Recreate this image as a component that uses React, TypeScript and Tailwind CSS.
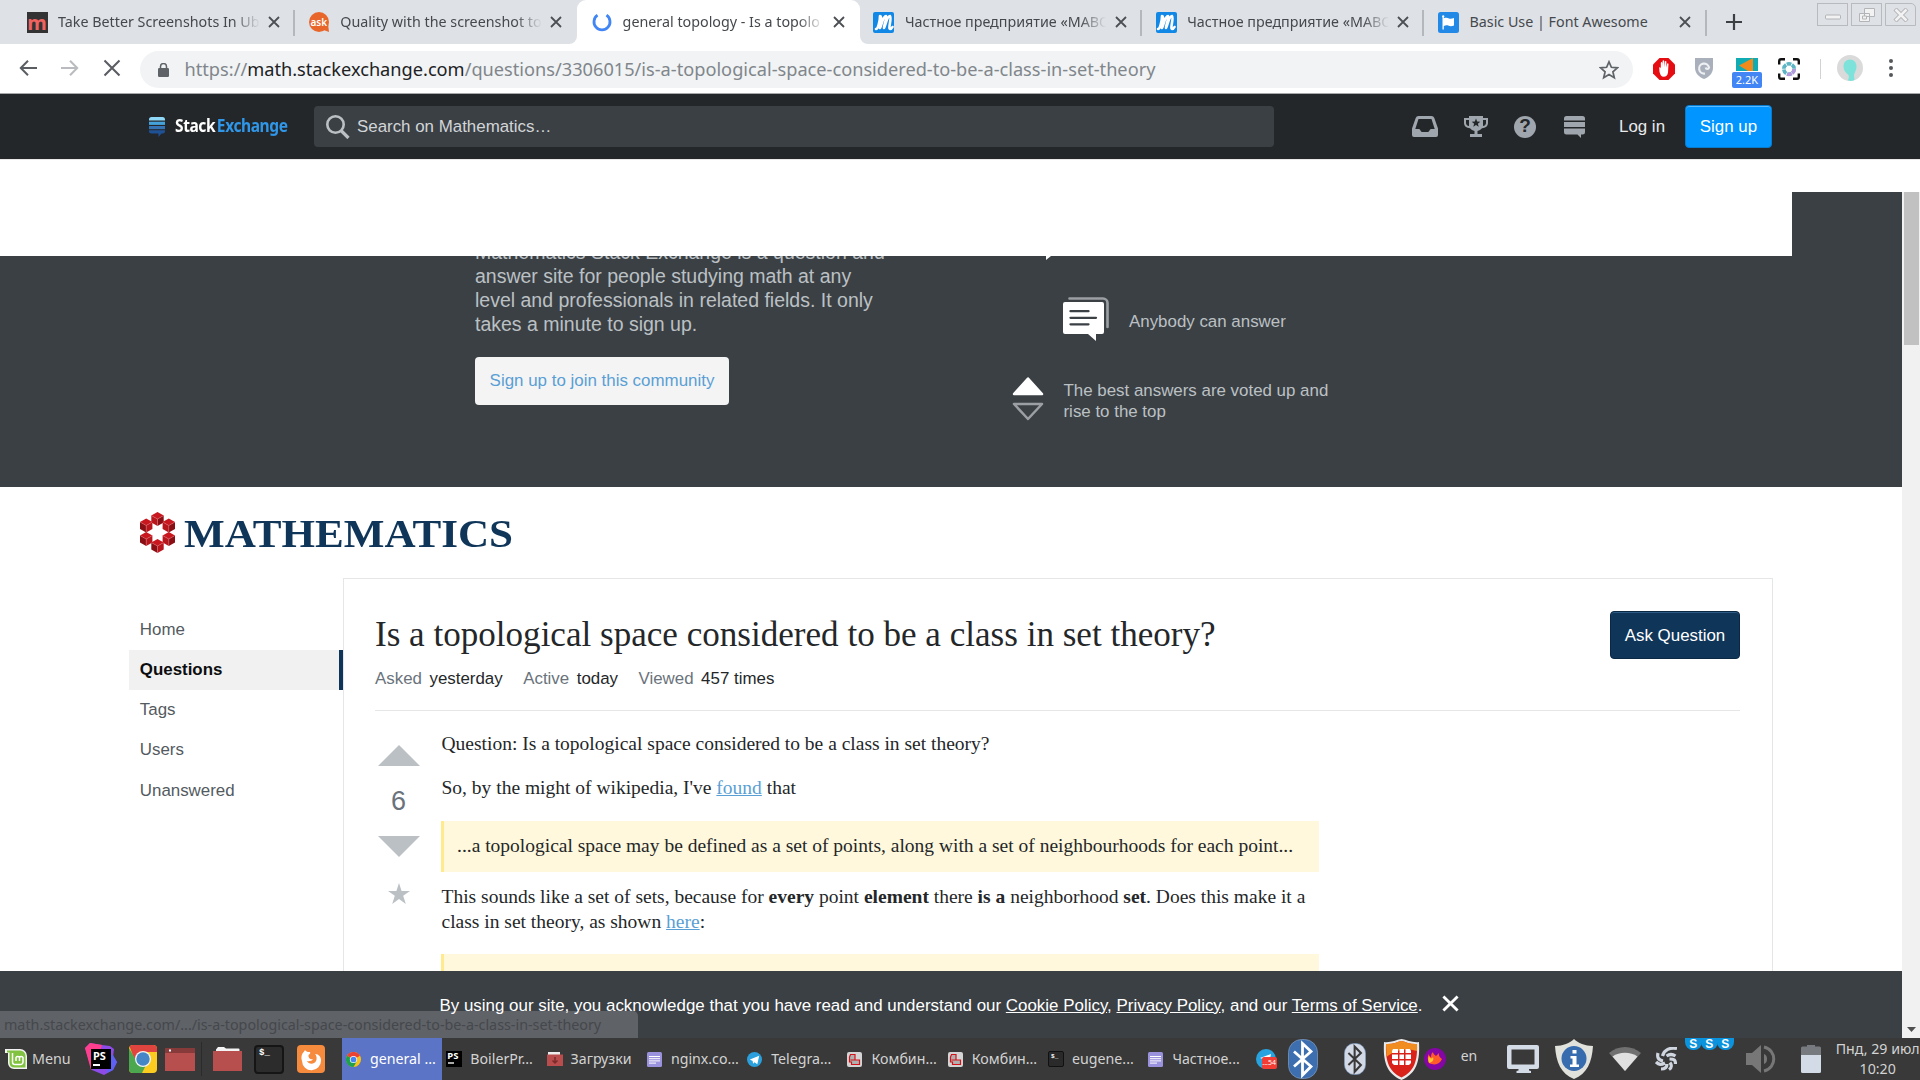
import type { ReactNode } from "react";

const SANS = "font-['Liberation_Sans',Arial,sans-serif]";
const SERIF = "font-['Liberation_Serif','Times_New_Roman',serif]";
const NOTO = "font-['Noto_Sans',sans-serif]";

/* ---------- Browser tabs ---------- */

function MavFavicon() {
  return (
    <div className="flex size-[21px] items-center justify-center rounded-[2px] bg-[#1188e6]">
      <svg viewBox="0 0 20 20" className="size-[20px]" fill="none" stroke="#fff" strokeWidth="2.600" strokeLinecap="round" strokeLinejoin="round">
        <path d="M2 17c2 0 4-8 4-13 2 0 1 8 0 12 2-4 3-12 6-12 1 3-2 8-2 12 2-4 3-12 6-12 2 1-2 13 0 13 1 0 2-1 2.500-2" />
      </svg>
    </div>
  );
}

const tabs: { title: string; active?: boolean; line?: boolean; icon: ReactNode }[] = [
  {
    title: "Take Better Screenshots In Ub",
    line: true,
    icon: <div className="flex size-[21px] items-end justify-center bg-[#333] text-[20px] leading-[20px] font-bold text-[#f0625f]">m</div>,
  },
  {
    title: "Quality with the screenshot to",
    icon: (
      <div className="relative flex size-[20px] items-center justify-center rounded-full bg-[#e8662a]">
        <svg className="absolute right-0 bottom-0 size-[8px]" viewBox="0 0 8 8"><path d="M0 5 7 0 8 8Z" fill="#e8662a" /></svg>
        <span className="relative text-[10px] leading-none font-semibold text-white">ask</span>
      </div>
    ),
  },
  {
    title: "general topology - Is a topolo",
    active: true,
    icon: (
      <svg viewBox="0 0 20 20" className="ml-px size-[20px]" fill="none" stroke="#4285f4" strokeWidth="2.800">
        <path d="M5.500 3.200A8 8 0 1 0 14.500 3.200" />
      </svg>
    ),
  },
  { title: "Частное предприятие «МАВС", line: true, icon: <MavFavicon /> },
  { title: "Частное предприятие «МАВС", line: true, icon: <MavFavicon /> },
  {
    title: "Basic Use | Font Awesome",
    line: true,
    icon: (
      <svg viewBox="0 0 21 21" className="size-[21px]">
        <rect width="21" height="21" rx="2.500" fill="#228ae6" />
        <path d="M4 4.500a1.200 1.200 0 1 1 1.800 1v.8c2-.8 3.500-.6 5.200.1 1.600.6 3 .2 5-.5v7.500c-2 .9-3.600 1-5.200.4-1.700-.6-3-.7-5 .2V17.500H4.500V5.500Z" fill="#fff" />
      </svg>
    ),
  },
];

function Cross({ className }: { className: string }) {
  return (
    <svg viewBox="0 0 12 12" className={className} fill="none" stroke="currentColor">
      <path d="M1 1 11 11M11 1 1 11" />
    </svg>
  );
}

function TabStrip() {
  return (
    <div className={`flex h-[44px] bg-[#dee1e6] pl-[13px] ${NOTO}`}>
      {tabs.map((t, i) => (
        <div key={i} className={`relative flex w-[282.300px] shrink-0 items-center pl-[13.500px] ${t.active ? "-ml-px w-[283.300px] rounded-t-[9px] bg-white pl-[14.500px]" : ""}`}>
          {t.active && (
            <>
              <span className="absolute bottom-0 -left-[8px] size-[8px] bg-white"><span className="block size-full rounded-br-[8px] bg-[#dee1e6]" /></span>
              <span className="absolute -right-[8px] bottom-0 size-[8px] bg-white"><span className="block size-full rounded-bl-[8px] bg-[#dee1e6]" /></span>
            </>
          )}
          <div className="w-[21px]">{t.icon}</div>
          <div className={`ml-[10.500px] w-[203.500px] pb-[1px] text-[14.300px] whitespace-nowrap text-[#45494d] ${i < 5 ? "[mask-image:linear-gradient(to_right,black_86%,transparent_99%)]" : ""}`}>
            {t.title}
          </div>
          <Cross className="ml-[6.500px] size-[12px] stroke-[1.800] text-[#4c5054]" />
          {t.line && <span className="absolute top-[10px] right-0 h-[26px] w-[2px] bg-[#b4b7bb]" />}
        </div>
      ))}
      <svg viewBox="0 0 16 16" className="mt-[14px] ml-[19px] size-[16px]" stroke="#3c4043" strokeWidth="2.200"><path d="M8 0v16M0 8h16" /></svg>
      <div className="mt-[3px] ml-[75.500px] flex gap-[3px] text-[#b3b4b7]">
        <div className="flex h-[23px] w-[31px] items-center justify-center border border-[#b9babd]">
          <svg viewBox="0 0 16 6" className="mt-[5px] w-[16px]" fill="#f2f2f2" stroke="currentColor"><rect x=".5" y="1" width="15" height="4" rx="1" /></svg>
        </div>
        <div className="flex h-[23px] w-[31px] items-center justify-center border border-[#b9babd]">
          <svg viewBox="0 0 16 14" className="w-[16px]" fill="#f2f2f2" stroke="currentColor"><path d="M5.500.5h10v8h-10zM.5 5.500h10v8H.5z" /><path d="M3.500 8h4v3h-4z" /></svg>
        </div>
        <div className="flex h-[23px] w-[31px] items-center justify-center rounded-tr-[5px] border border-[#b9babd]">
          <svg viewBox="0 0 16 14" className="w-[16px]"><path d="M2 1 14 13M14 1 2 13" stroke="#b3b4b7" strokeWidth="4.500" /><path d="M2.500 1.500 13.500 12.500M13.500 1.500 2.500 12.500" stroke="#f2f2f2" strokeWidth="2.500" /></svg>
        </div>
      </div>
    </div>
  );
}

/* ---------- Address bar ---------- */

function AddressBar() {
  return (
    <div className={`flex h-[50px] items-start border-b border-[#a6a8aa] bg-white ${NOTO}`}>
      <div className="mt-[15px] ml-[19px] flex w-[121px] items-center text-[#5a5d62]">
        <svg viewBox="0 0 18 16" className="w-[18px]" fill="none" stroke="currentColor" strokeWidth="2"><path d="M18 8H2M9 .8 1.800 8 9 15.200" /></svg>
        <svg viewBox="0 0 18 16" className="ml-[24px] w-[18px]" fill="none" stroke="#b9bbbe" strokeWidth="2"><path d="M0 8H16M9 .8 16.200 8 9 15.200" /></svg>
        <Cross className="ml-[24px] size-[18px] stroke-[1.400]" />
      </div>
      <div className="mt-[7px] flex h-[37px] w-[1493px] items-center rounded-full bg-[#f1f3f4] pl-[18px]">
        <svg viewBox="0 0 11 14" className="w-[11px]"><rect y="5" width="11" height="9" rx="1.200" fill="#5f6368" /><path d="M2.500 6V3.500a3 3 0 0 1 6 0V6" fill="none" stroke="#5f6368" strokeWidth="1.500" /></svg>
        <div className="ml-[15.500px] w-[1400.500px] text-[18.200px] leading-none whitespace-nowrap text-[#80868b]">
          https://<span className="text-[#202124]">math.stackexchange.com</span>/questions/3306015/is-a-topological-space-considered-to-be-a-class-in-set-theory
        </div>
        <svg viewBox="0 0 20 20" className="ml-[14px] size-[20px] shrink-0" fill="none" stroke="#5f6368" strokeWidth="1.700"><path d="m10 1.800 2.400 5.500 6 .5-4.500 4 1.400 5.900L10 14.500l-5.300 3.200 1.400-5.900-4.500-4 6-.5Z" /></svg>
      </div>
      <svg viewBox="0 0 22 22" className="mt-[14px] ml-[20px] size-[22px]">
        <path d="M6.500 0h9L22 6.500v9L15.500 22h-9L0 15.500v-9Z" fill="#e60d12" />
        <path d="M6.200 9.500c.9-.6 1.400.2 1.600 1V5c.2-1.200 1.300-1.200 1.500 0v4l.3-6c.2-1.100 1.400-1.100 1.600 0l.2 6 .5-5.400c.2-1 1.400-.9 1.500 0L13.300 9.500l.8-3.700c.3-1 1.400-.7 1.400.3l-.5 8.500c-.4 3-2 4.200-4.200 4.200-2.600 0-3.600-2-4.300-5Z" fill="#fff" />
      </svg>
      <svg viewBox="0 0 18 21" className="mt-[14px] ml-[20px] w-[18px]"><path d="M0 0h18v10c0 5-4 9-9 11-5-2-9-6-9-11Z" fill="#a9b0bb" /><path d="M10 15.500A5 5 0 1 1 14 9.500c-.5 2-3 2-3.300 0" fill="none" stroke="#eef0f3" strokeWidth="2.200" /></svg>
      <div className="mt-[14px] ml-[19px] flex w-[30px] flex-col items-center">
        <svg viewBox="0 0 22 13" className="w-[22px]"><path fill="#0fadb3" d="M0 0h22v13H0z" /><path fill="#f08a1d" d="M3 7.500 17 0v13H12Z" /></svg>
        <div className="mt-px h-[16px] w-[30px] rounded-[2px] bg-[#4285f4] text-center text-[11px] leading-[16px] text-white">2.2K</div>
      </div>
      <svg viewBox="0 0 22 22" className="mt-[14px] ml-[16px] size-[22px]" fill="none">
        <path d="M1.200 6.500V3a1.800 1.800 0 0 1 1.800-1.800h4M15 1.200h4A1.800 1.800 0 0 1 20.800 3v3.500M20.800 15.500V19a1.800 1.800 0 0 1-1.800 1.800h-4M7 20.800H3A1.800 1.800 0 0 1 1.200 19v-3.500" stroke="#111" strokeWidth="2.400" />
        <circle cx="11" cy="11" r="5.200" stroke="#5cb4c4" strokeWidth="3.600" strokeDasharray="4.600 .8" />
        <path d="M16.200 11a5.200 5.200 0 0 1-7 5" stroke="#b597dc" strokeWidth="3.600" strokeDasharray="4.600 .8" />
      </svg>
      <span className="mt-[15px] ml-[20px] h-[20px] w-px bg-[#d0d2d4]" />
      <svg viewBox="0 0 26 26" className="mt-[11px] ml-[16px] size-[26px]"><circle cx="13" cy="13" r="13" fill="#dadada" /><path d="M13 4.500c4 0 6.500 3 6.500 7 0 4-2 5.500-2.500 9l.5 4.500c-3 1.500-6 1-6.500 0 1-2 1-3.500.5-5C8.500 18 6.500 15 6.500 11.500c0-4 2.500-7 6.500-7Z" fill="#7de3da" /></svg>
      <svg viewBox="0 0 4 18" className="mt-[15px] ml-[26px] w-[4px]" fill="#54585d"><circle cx="2" cy="2" r="2" /><circle cx="2" cy="9" r="2" /><circle cx="2" cy="16" r="2" /></svg>
    </div>
  );
}

/* ---------- Site header ---------- */

function SiteHeader() {
  return (
    <div className={`flex h-[65px] items-center bg-[#242729] pl-[149px] text-[16.900px] ${SANS}`}>
      <svg viewBox="0 0 16 20" className="w-[16px]">
        <path d="M0 3.500V2.500A2.500 2.500 0 0 1 2.500 0h11A2.500 2.500 0 0 1 16 2.500v1Z" fill="#8fd8f7" />
        <path d="M0 4.700h16v3.200H0z" fill="#46a2da" />
        <path d="M0 9h16v3.200H0z" fill="#3673b5" />
        <path d="M0 13.300h16V14a2.500 2.500 0 0 1-2.500 2.500H12.500L9.500 20v-3.500h-7A2.500 2.500 0 0 1 0 14Z" fill="#1f5196" />
      </svg>
      <div className="ml-[9.500px] w-[139.500px]">
        <span className={`inline-block origin-left scale-x-[0.840] text-[18.500px] leading-none font-bold tracking-[-0.500px] whitespace-nowrap text-white ${NOTO}`}>
          Stack<span className="ml-[2px] text-[#2f96e8]">Exchange</span>
        </span>
      </div>
      <div className="flex h-[41px] w-[960px] items-center rounded-[4px] bg-[#3b4045] pl-[12px] text-[#d2d5d8]">
        <svg viewBox="0 0 24 24" className="mt-px size-[24px]" fill="none" stroke="#bbc0c4"><circle cx="9.500" cy="9.500" r="8.200" strokeWidth="2.600" /><path d="m15 15.500 7.500 7.500" strokeWidth="3.200" /></svg>
        <span className="ml-[7px]">Search on Mathematics…</span>
      </div>
      <div className="ml-[138px] flex items-center">
        <svg viewBox="0 0 26 21" className="w-[26px]" fill="#9fa6ad"><path fillRule="evenodd" d="M6.500 0h13a3 3 0 0 1 2.800 2L26 12.500V19a2 2 0 0 1-2 2H2a2 2 0 0 1-2-2v-6.500L3.700 2a3 3 0 0 1 2.800-2Zm0 3L3.300 13H7c1.500 0 1.500 3 3 3h6c1.500 0 1.500-3 3-3h3.700L19.500 3Z" /></svg>
        <svg viewBox="0 0 24 21" className="ml-[25.500px] w-[24px]" fill="#9fa6ad">
          <path fillRule="evenodd" d="M5 0h14v2h5v5c0 3-2.500 5-6 5.300A7 7 0 0 1 13.500 15v3H18v3H6v-3h4.500v-3A7 7 0 0 1 6 12.300C2.500 12 0 10 0 7V2h5Zm0 4H2v3c0 1.600 1.200 2.700 3 3Zm14 6c1.800-.3 3-1.400 3-3V4h-3Z" />
          <path d="m12 2.500 1.200 3 3.100.2-2.400 2 .8 3.100L12 9.100l-2.700 1.700.8-3.100-2.400-2 3.100-.2Z" fill="#242729" />
        </svg>
        <div className="ml-[26.500px] flex size-[22px] items-center justify-center rounded-full bg-[#9fa6ad] text-[19px] font-bold text-[#242729]">?</div>
        <svg viewBox="0 0 21 22" className="mt-px ml-[28px] w-[21px]" fill="#9fa6ad"><path d="M0 4.600V2.500A2.500 2.500 0 0 1 2.500 0h16A2.500 2.500 0 0 1 21 2.500V4.600ZM0 5.900h21v5H0zM0 12.400h21V16a2.500 2.500 0 0 1-2.500 2.500H17V22l-3.500-3.500h-11A2.500 2.500 0 0 1 0 16Z" /></svg>
        <span className="ml-[34px] w-[66px] whitespace-nowrap text-[#e8eaec]">Log in</span>
        <div className="flex h-[43px] w-[87px] items-center justify-center rounded-[4px] border border-[#077ccf] bg-[#0095ff] whitespace-nowrap text-white shadow-[inset_0_1px_0_#5cbaff]">Sign up</div>
      </div>
    </div>
  );
}

/* ---------- Hero ---------- */

function Hero() {
  return (
    <div className={`relative flex h-[231px] bg-[#3b4045] pl-[475px] text-[#bbc0c4] ${SANS}`}>
      <div className="w-[536px] shrink-0 overflow-hidden">
        <p className="-mt-[16px] text-[19.500px] leading-[24px] whitespace-nowrap">
          Mathematics Stack Exchange is a question and<br />answer site for people studying math at any<br />level and professionals in related fields. It only<br />takes a minute to sign up.
        </p>
        <div className="mt-[21px] flex h-[48px] w-[254px] items-center justify-center rounded-[4px] bg-[#f4f4f4] text-[16.930px] text-[#5a9fd4]">Sign up to join this community</div>
      </div>
      <div className="w-[330px]">
        <svg viewBox="0 0 5 4" className="ml-[35px] h-[4px] w-[5px]"><path d="M0 0h5L0 4Z" fill="#fff" /></svg>
        <div className="mt-[37px] ml-[52px] flex">
          <svg viewBox="0 0 46 44" className="h-[44px] w-[46px]" fill="none">
            <path d="M6.500 1.500H40a4.500 4.500 0 0 1 4.500 4.500v24" stroke="#9c9fa3" strokeWidth="2.600" strokeLinecap="round" />
            <path d="M2 5h37a2 2 0 0 1 2 2v28a2 2 0 0 1-2 2h-6v7l-8-7H2a2 2 0 0 1-2-2V7a2 2 0 0 1 2-2Z" fill="#fff" />
            <path d="M7.500 14.200H25.500M7.500 20.800H33M7.500 27.300H25.500" stroke="#3b4045" strokeWidth="2.300" strokeLinecap="round" />
          </svg>
          <span className="mt-[14px] ml-[20px] text-[16.900px] leading-[21px] whitespace-nowrap">Anybody can answer</span>
        </div>
        <div className="mt-[36px] ml-[0.500px] flex">
          <svg viewBox="0 0 32 44" className="h-[44px] w-[32px]" strokeLinejoin="round">
            <path d="M16 1.500 30 17H2Z" fill="#fff" stroke="#fff" strokeWidth="2.500" />
            <path d="M2 27h28L16 42Z" fill="none" stroke="#9c9fa3" strokeWidth="2.500" />
          </svg>
          <span className="mt-[3px] ml-[20px] text-[16.900px] leading-[21px] whitespace-nowrap">The best answers are voted up and<br />rise to the top</span>
        </div>
      </div>
      <span className="absolute right-0 bottom-full h-[64px] w-[110px] bg-[#3b4045]" />
    </div>
  );
}

/* ---------- Page content ---------- */

const cubes = [[17.500, 7], [6.200, 13.500], [28.800, 13.500], [6.200, 27], [28.800, 27], [17.500, 34]];

function MathLogo() {
  return (
    <div className="flex h-[91px] items-start pt-[25px] pl-[140px]">
      <svg viewBox="0 0 35 41" className="w-[35px]">
        {cubes.map(([x, y], i) => (
          <g key={i}>
            <path d={`M${x} ${y - 7}l6.200 3.500-6.200 3.500-6.200-3.500Z`} fill="#c8171e" />
            <path d={`M${x - 6.2} ${y - 3.5}l6.200 3.500v7l-6.200-3.500Z`} fill={i % 2 ? "#8a0f14" : "#b8161d"} />
            <path d={`M${x + 6.2} ${y - 3.5}l-6.200 3.500v7l6.200-3.500Z`} fill={i % 2 ? "#b8161d" : "#8a0f14"} />
            <path d={`M${x - 6.2} ${y - 3.5}l6.200 3.500 6.200-3.500M${x} ${y}v7`} fill="none" stroke="#e26a6e" strokeWidth=".5" />
          </g>
        ))}
      </svg>
      <span className={`ml-[9px] origin-left scale-x-[1.052] text-[41px] leading-[43px] font-bold text-[#0f3559] ${SERIF}`}>MATHEMATICS</span>
    </div>
  );
}

const nav = ["Home", "Questions", "Tags", "Users", "Unanswered"];

function SideNav() {
  return (
    <nav className={`mt-[31.500px] w-[214px] text-[16.900px] text-[#535a60] ${SANS}`}>
      {nav.map((n) => (
        <div key={n} className={`flex h-[40.200px] items-center pl-[10.800px] ${n === "Questions" ? "border-r-4 border-[#0f3559] bg-[#f1f1f1] font-bold text-[#0c0d0e]" : ""}`}>{n}</div>
      ))}
    </nav>
  );
}

function Stat({ label, value }: { label: string; value: string }) {
  return (
    <span className="mr-[20.500px] whitespace-nowrap text-[#242729]"><span className="mr-[7.500px] text-[#6a737c]">{label}</span>{value}</span>
  );
}

function Question() {
  return (
    <div className="h-[393px] w-[1430px] overflow-hidden border border-b-0 border-[#e4e6e8] pt-[32px] pr-[32px] pl-[31px]">
      <div className="flex justify-between">
        <h1 className={`text-[35.100px] leading-[48px] whitespace-nowrap text-[#242729] ${SERIF}`}>Is a topological space considered to be a class in set theory?</h1>
        <div className={`flex h-[48px] w-[130px] items-center justify-center rounded-[4px] border border-[#0a2744] bg-[#0f3559] pt-px text-[16.900px] text-white shadow-[inset_0_1px_0_#2e5a86] ${SANS}`}>Ask Question</div>
      </div>
      <div className={`mt-[8px] flex h-[44px] items-start border-b border-[#e4e6e8] text-[16.900px] leading-[24px] ${SANS}`}>
        <Stat label="Asked" value="yesterday" />
        <Stat label="Active" value="today" />
        <Stat label="Viewed" value="457 times" />
      </div>
      <div className="flex">
        <div className={`flex w-[47px] flex-col items-center pt-[34px] text-[#bbc0c4] ${SANS}`}>
          <svg viewBox="0 0 42 21" className="w-[42px]" fill="currentColor"><path d="M21 0 42 21H0Z" /></svg>
          <span className="mt-[18px] text-[27px] leading-[34px] text-[#6a737c]">6</span>
          <svg viewBox="0 0 42 21" className="mt-[18px] w-[42px]" fill="currentColor"><path d="M0 0h42L21 21Z" /></svg>
          <svg viewBox="0 0 22 21" className="mt-[26px] w-[22px]" fill="currentColor"><path d="m11 0 2.600 7.900H22l-6.800 4.900L17.800 21 11 16 4.200 21l2.600-8.200L0 7.900h8.400Z" /></svg>
        </div>
        <div className={`ml-[19px] w-[878px] text-[19.500px] leading-[25px] whitespace-nowrap text-[#242729] ${SERIF}`}>
          <p className="mt-[20px] pl-[0.500px]">Question: Is a topological space considered to be a class in set theory?</p>
          <p className="mt-[19px] pl-[0.500px]">So, by the might of wikipedia, I've <a className="text-[#5a9fd4] underline">found</a> that</p>
          <div className="mt-[21px] h-[51px] border-l-[3px] border-[#ffeb8e] bg-[#fff8dc] pt-[12px] pl-[13px]">...a topological space may be defined as a set of points, along with a set of neighbourhoods for each point...</div>
          <p className="mt-[12px] pl-[0.500px]">This sounds like a set of sets, because for <b>every</b> point <b>element</b> there <b>is a</b> neighborhood <b>set</b>. Does this make it a<br />class in set theory, as shown <a className="text-[#5a9fd4] underline">here</a>:</p>
          <div className="mt-[20px] h-[51px] border-l-[3px] border-[#ffeb8e] bg-[#fff8dc]" />
        </div>
      </div>
    </div>
  );
}

function CookieBar() {
  return (
    <div className={`relative flex h-[67px] items-center bg-[#3b4045] pl-[439.500px] text-[16.930px] whitespace-nowrap text-white ${SANS}`}>
      <div className={`absolute bottom-0 left-0 h-[27px] w-[638px] rounded-tr-[5px] bg-[#5f6267] pl-[4px] text-[14.300px] leading-[27px] text-[#45484c] ${NOTO}`}>
        math.stackexchange.com/.../is-a-topological-space-considered-to-be-a-class-in-set-theory
      </div>
      <span className="relative mt-[2px]">
        By using our site, you acknowledge that you have read and understand our <u>Cookie Policy</u>, <u>Privacy Policy</u>, and our <u>Terms of Service</u>.
      </span>
      <Cross className="mb-[2px] ml-[19.500px] size-[17px] stroke-[2]" />
    </div>
  );
}

function Scrollbar() {
  return (
    <div className="flex w-[18px] flex-col items-center justify-between bg-[#f1f1f1]">
      <span className="h-[153px] w-[15px] bg-[#c1c1c1]" />
      <svg viewBox="0 0 9 5" className="mb-[6px] w-[9px]"><path d="M0 0h9L4.500 5Z" fill="#505050" /></svg>
    </div>
  );
}

/* ---------- Taskbar ---------- */

function ChromeIcon({ className }: { className: string }) {
  return (
    <svg viewBox="0 0 20 20" className={className}>
      <circle cx="10" cy="10" r="10" fill="#fbc116" />
      <path d="M10 10 1.300 5A10 10 0 0 1 18.700 5Z" fill="#ea4335" />
      <path d="M1.300 5A10 10 0 0 0 10 20l4.300-7.500L10 10Z" fill="#1ea050" />
      <circle cx="10" cy="10" r="4.800" fill="#fff" /><circle cx="10" cy="10" r="3.800" fill="#4285f4" />
    </svg>
  );
}

function PsIcon() {
  return (
    <div className="flex size-[16px] flex-col bg-black pl-[1px] text-[9.500px] leading-[10px] font-bold text-white">PS<span className="mt-[1px] ml-[1px] h-[2px] w-[6px] bg-[#aaa]" /></div>
  );
}
function DocIcon() {
  return (
    <svg viewBox="0 0 15 15" className="size-[15px]"><rect width="15" height="15" rx="1.500" fill="#9a92dc" /><path d="M2 4.500h11M2 6.700h11M2 8.900h11M2 11.100h7" stroke="#fff" /></svg>
  );
}
function CombineIcon() {
  return (
    <svg viewBox="0 0 15 15" className="size-[15px]"><rect width="15" height="15" rx="2" fill="#d4d4d4" /><path d="M3.500 2.500h4.500V8h4.500v4.500h-8V10H2.500V5Zm0 5.500H8" fill="#b0b0b0" stroke="#d3131b" strokeWidth="1.200" /></svg>
  );
}

const tasks: { label: string; icon: ReactNode; active?: boolean }[] = [
  { label: "general ...", active: true, icon: <ChromeIcon className="size-[15px]" /> },
  { label: "BoilerPr...", icon: <PsIcon /> },
  { label: "Загрузки", icon: <svg viewBox="0 0 16 14" className="w-[16px]"><path d="M1 0h12v3H1z" fill="#eee" /><path d="M0 2.500h16V14H0z" fill="#b94c4c" /><path d="M8 5v6M5.500 8.500 8 11l2.500-2.500" fill="none" stroke="#7b2b2b" strokeWidth="1.500" /></svg> },
  { label: "nginx.co...", icon: <DocIcon /> },
  { label: "Telegra...", icon: <svg viewBox="0 0 16 16" className="size-[15px]"><circle cx="8" cy="8" r="8" fill="#2ba0dc" /><path d="m3 8 10-4-2 9-3-2-1.500 1.500L6 9.500Z" fill="#fff" /></svg> },
  { label: "Комбин...", icon: <CombineIcon /> },
  { label: "Комбин...", icon: <CombineIcon /> },
  { label: "eugene...", icon: <div className="size-[16px] rounded-[2px] border border-[#111] bg-[#2a2a2a] pl-[2px] font-mono text-[6px] leading-[9px] font-bold text-white">$_</div> },
  { label: "Частное...", icon: <DocIcon /> },
];

function Bluetooth({ className, bg, fg }: { className: string; bg: string; fg: string }) {
  return (
    <svg viewBox="0 0 30 40" className={className} preserveAspectRatio="none">
      <rect x=".5" y=".5" width="29" height="39" rx="13" fill={bg} stroke="#7895bd" strokeWidth=".8" />
      <path d="m6 12.500 17 15-8.500 8.500V4.500L23 12.500 6 27.500" fill="none" stroke={fg} strokeWidth="2.800" />
    </svg>
  );
}

function Skype() {
  return (
    <div className="-mr-[1px] flex h-[12px] w-[17px] items-end justify-center rounded-b-[8px] bg-[#0c93dd] text-[12px] leading-[12px] font-bold text-white">S</div>
  );
}

function Taskbar() {
  return (
    <div className={`flex h-[42px] items-center overflow-hidden bg-[#393939] text-[#d3d3d3] ${NOTO}`}>
      <svg viewBox="0 0 22 20" className="ml-[5px] w-[22px]">
        <path d="M0 0h15a7 7 0 0 1 7 7v13H9a6 6 0 0 1-6-6V4H0Z" fill="#f3f3f3" />
        <path d="M2 1.500h13A5.500 5.500 0 0 1 20.500 7v11.500H9.500A5 5 0 0 1 4.500 14V3.500H2Z" fill="#81c341" />
        <path d="M7.500 4V13a2.500 2.500 0 0 0 2.500 2.500h5.500A2.500 2.500 0 0 0 18 13V8.500a2 2 0 0 0-3.500 0V12 8.500a2 2 0 0 0-3.500 0V12" fill="none" stroke="#fff" strokeWidth="1.500" />
      </svg>
      <span className="ml-[5px] w-[48px] text-[14.300px]">Menu</span>
      <div className="relative ml-[5px] size-[32px]">
        <svg viewBox="0 0 32 32" className="absolute size-[32px]"><path d="M0 5 5 0l12 2 8 1 4 3-1 8 4 5-4 8-9 5-12-5Z" fill="#8d4be8" /><path d="M0 5 5 0l12 2-5 17-6 8Z" fill="#ff3f8e" /><path d="M24 12h4l4 7-4 8-6 3Z" fill="#5d62f5" /></svg>
        <div className="absolute top-[6px] left-[6px] h-[20px] w-[20px] bg-black pl-[2px] text-[11px] leading-[13px] font-bold text-white">PS<span className="mt-[2px] block h-[1.500px] w-[7px] bg-white" /></div>
      </div>
      <svg viewBox="0 0 28 28" className="ml-[12px] size-[28px]">
        <defs><clipPath id="sq"><rect width="28" height="28" rx="4" /></clipPath></defs>
        <g clipPath="url(#sq)"><path fill="#fccb1f" d="M0 0h28v28H0z" /><path d="M0 0h28v7H14L6 16Z" fill="#e0443e" /><path d="M0 3 8 17l9 3-4 8H0Z" fill="#4ba84f" /></g>
        <circle cx="14" cy="14" r="8" fill="#f4f4f4" /><circle cx="14" cy="14" r="6.700" fill="#4586c6" />
      </svg>
      <svg viewBox="0 0 30 23" className="ml-[8px] w-[30px]"><path fill="#b84f4f" d="M0 0h30v23H0z" /><path fill="#873a3a" d="M0 0h30v5H0z" /><path d="M4 1.500h2v2H4z" fill="#fff" /></svg>
      <span className="ml-[6px] h-[34px] w-px bg-[#2b2b2b]" />
      <svg viewBox="0 0 29 24" className="ml-[11px] w-[29px]"><path d="M3 2.500 5 0h6l2 1.500h12.500a1 1 0 0 1 1 1V6H3Z" fill="#f4f4f4" /><path fill="#b84f4f" d="M0 4h29v20H0z" /></svg>
      <div className="ml-[12px] h-[29px] w-[30px] rounded-[4px] border-2 border-[#151515] bg-[#2c2c2c] pl-[3px] font-mono text-[9px] leading-[12px] font-bold text-white">$_</div>
      <svg viewBox="0 0 28 28" className="ml-[13px] size-[28px]"><rect width="28" height="28" rx="4" fill="#f68a3d" /><path d="M5 9.500C6 7 7.500 6.500 8 5c1 1.500 2.500 2 4 2 2 0 1.500 2-.5 3-.5 3 2 5 4.500 4-1 3-6 2-6 2 1 3 7 4 9 0 1.500-3 0-6-1-7 4 0 6 3 6 6.500A9.500 9.500 0 0 1 5 16c-1-3-.5-5 0-6.500Z" fill="#fff" /></svg>
      <div className="ml-[17px] flex">
        {tasks.map((t, i) => (
          <div key={i} className={`flex h-[42px] w-[100.300px] items-center pl-[4px] ${t.active ? "bg-[#5b74c5] text-white" : ""}`}>
            <div className="w-[16px]">{t.icon}</div>
            <span className="ml-[8px] text-[14.200px] whitespace-nowrap">{t.label}</span>
          </div>
        ))}
      </div>
      <div className="ml-[11px] flex h-[42px] shrink-0 items-center">
        <div className="relative size-[20px] rounded-full bg-[#29a3df]">
          <svg viewBox="0 0 20 20" className="absolute size-[20px]"><path d="m4 9 11-4-1 5H7Z" fill="#fff" /></svg>
          <span className="absolute -right-px bottom-0 h-[12px] w-[15px] rounded-[2px] bg-[#f23c34] text-center text-[7px] leading-[12px] text-white">...54</span>
        </div>
        <Bluetooth className="ml-[12px] h-[40px] w-[30px]" bg="#3c6eb0" fg="#fff" />
        <Bluetooth className="ml-[26px] h-[32px] w-[22px]" bg="#d3dae6" fg="#393939" />
        <svg viewBox="0 0 37 41" className="ml-[17px] h-[41px] w-[37px]">
          <path d="M1 3C7 4 13 1 18.500 0 24 1 30 4 36 3c1 19-2 31-17.500 38C3 34 0 22 1 3Z" fill="#e9eaec" />
          <path d="M3 5c6 .6 11-2 15.500-3C23 3 28 5.600 34 5c.6 17-2.500 27-15.500 33.500C5.500 32 2.400 22 3 5Z" fill="#d8221a" />
          <path d="M3 5c6 .6 11-2 15.500-3C23 3 28 5.600 34 5v7c-8-3-22-2-30.500 6Z" fill="#f18d20" />
          <g fill="#fff"><path d="M10 10h5v4H9v-2ZM16.500 10h4.500v4h-4.500zM22.500 10H27l1 2v2h-5.500zM9 15.500h6v4.500H9zM16.500 15.500H21V20h-4.500zM22.500 15.500H28V20h-5.500zM9 21.500h6V26h-4l-2-2ZM16.500 21.500H21V26h-4.500zM22.500 21.500H28V24l-2 2h-3.500z" /></g>
        </svg>
        <svg viewBox="0 0 22 22" className="ml-[4px] size-[22px]"><circle cx="11" cy="11" r="11" fill="#8406a4" /><path d="M5 15C3 10 4 7 5 6c0 2 1 3 2 3 0-3 1-4 2-5 0 2 2 3 3 4l3-3c-.5 2 0 4 3 6-2 5-7 7-13 4Z" fill="#ff5a2c" /><path d="M5 15c-1-3-1-5 0-7 1 3 3 3 4 1 1 3 0 5-4 6Z" fill="#ffc52e" /></svg>
        <span className="mb-[7px] ml-[15px] w-[31px] text-[14px]">en</span>
        <svg viewBox="0 0 32 28" className="ml-[15px] w-[32px]" fill="#d3dbe6"><path fillRule="evenodd" d="M2 0h28a2 2 0 0 1 2 2v20a2 2 0 0 1-2 2h-8v1.500l2 .5v2H9.500v-2l2-.5V24H2a2 2 0 0 1-2-2V2a2 2 0 0 1 2-2Zm2.500 4.500v15h23v-15Z" /></svg>
        <svg viewBox="0 0 38 40" className="ml-[16px] h-[40px] w-[38px]"><path d="M19 0c4 4 11 7 19 7-1 16-6 28-19 33C6 35 1 23 0 7 8 7 15 4 19 0Z" fill="#e2e2dc" /><circle cx="19" cy="19.500" r="12.500" fill="#376caf" /><path d="M17.500 11h4v3.500h-4zM15.500 17h6v8.500h2.500V28h-9v-2.500h2.500v-6h-2z" fill="#fff" /></svg>
        <svg viewBox="0 0 32 24" className="ml-[16px] w-[32px]"><path d="M0 6C9-2 23-2 32 6L16 24Z" fill="#707070" /><path d="M3.500 9.500c7-5 18-5 25 0L16 24Z" fill="#e0e0e0" /></svg>
        <svg viewBox="0 0 22 24" className="ml-[14px] w-[22px]" fill="none" stroke="#cfd6e0" strokeWidth="3.200">
          <path d="M22 1.500C15 0 9 3 7.500 9M3 6c-1 4 0 7 5 8M1 15c3 3 5 3 9 1M6 22c4 0 6-2 6-5M14 22.500c3-2 3-4 1-7M20.500 17c0-4-1-5-6-5M20.500 9c-3-2-6-2-9 0" />
        </svg>
        <div className={`ml-[8px] flex h-[42px] items-start ${SANS}`}><Skype /><Skype /><Skype /></div>
        <svg viewBox="0 0 30 28" className="ml-[13px] w-[30px]"><path d="M0 8h6l9-8v28l-9-8H0Z" fill="#777" /><path d="M18 9c4 1 4 9 0 10Z" fill="#777" /><path d="M18 2c13 3 13 21 0 24" fill="none" stroke="#777" strokeWidth="3" /></svg>
        <svg viewBox="0 0 20 28" className="ml-[25px] w-[20px]"><path d="M0 3a1.500 1.500 0 0 1 1.500-1.500H6V0h8v1.500h4.500A1.500 1.500 0 0 1 20 3v8H0Z" fill="#777b80" /><path d="M0 10h20v16.500a1.500 1.500 0 0 1-1.500 1.500h-17A1.500 1.500 0 0 1 0 26.500Z" fill="#d3dbe6" /></svg>
        <div className="ml-[15px] w-[84px] text-center text-[14.200px] leading-[20px] whitespace-nowrap">Пнд, 29 июл<br />10:20</div>
      </div>
    </div>
  );
}

export default function App() {
  return (
    <div className="flex h-[1080px] w-[1920px] flex-col overflow-hidden bg-white">
      <TabStrip />
      <AddressBar />
      <SiteHeader />
      <div className="h-[33px] border-t border-[#e9e9ea] bg-white" />
      <div className="flex h-[846px]">
        <div className="w-[1902px] pt-[64px]">
          <Hero />
          <div className="h-[484px]">
            <MathLogo />
            <div className="flex h-[393px] pl-[129px]">
              <SideNav />
              <Question />
            </div>
          </div>
          <CookieBar />
        </div>
        <Scrollbar />
      </div>
      <Taskbar />
    </div>
  );
}
